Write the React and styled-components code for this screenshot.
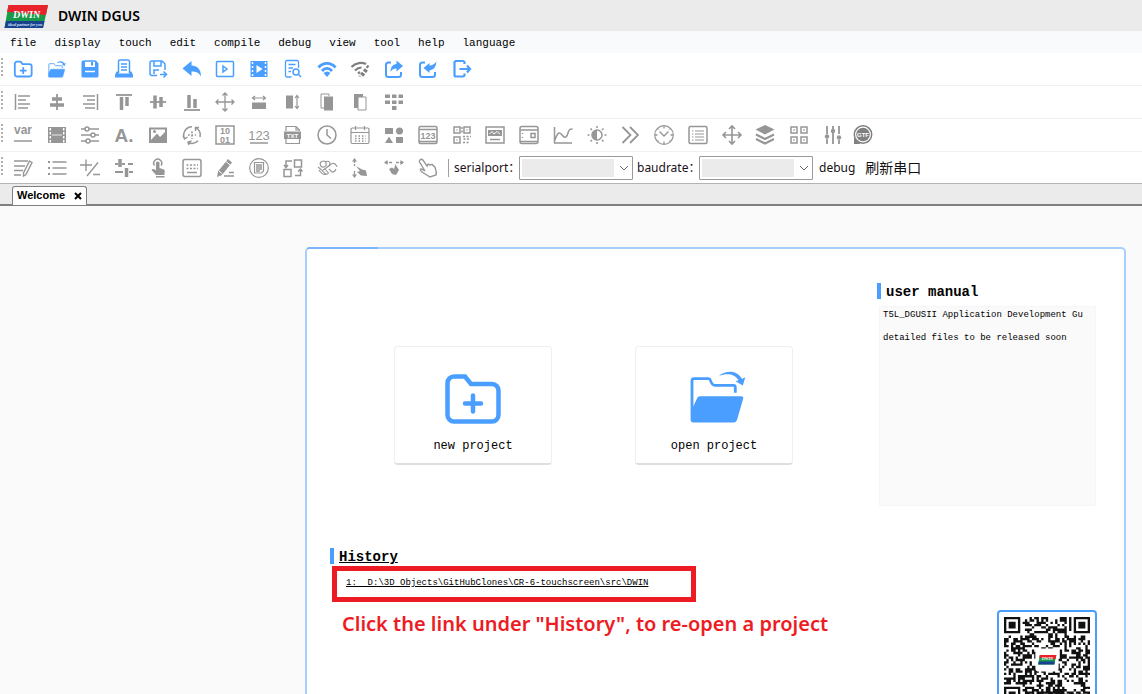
import React from "react";
import styled, { createGlobalStyle } from "styled-components";

const BLUE = "#4a9eff";
const GRAY = "#969696";
const MONO = '"Liberation Mono", "Noto Sans CJK SC", monospace';
const UI = '"Noto Sans", "Noto Sans CJK SC", sans-serif';

const GlobalStyle = createGlobalStyle`
  * { box-sizing: border-box; }
  body { margin: 0; background: #fafafa; color: #000; font-family: ${UI}; }
  button, select { font: inherit; color: inherit; }
`;

const Window = styled.div`
  display: flex;
  flex-direction: column;
  height: 100vh;
  overflow: hidden;
`;

const TitleBar = styled.header`
  display: flex;
  align-items: center;
  gap: 10px;
  flex: none;
  height: 31px;
  padding: 1px 0 0 4px;
  background: #ebebeb;
`;

const AppTitle = styled.h1`
  margin: 0;
  font-size: 14px;
  line-height: 20px;
  font-weight: 600;
`;

const MenuBar = styled.nav`
  display: flex;
  align-items: center;
  gap: 18px;
  flex: none;
  height: 22px;
  padding: 2px 10px 0;
  background: #f9fafc;
`;

const MenuItem = styled.button`
  padding: 0;
  border: 0;
  background: none;
  font-family: ${MONO};
  font-size: 11px;
  line-height: 16px;
`;

const Toolbar = styled.div`
  display: flex;
  align-items: center;
  flex: none;
  height: ${(p) => (p.$last ? 31 : 33)}px;
  padding: ${(p) => (p.$last ? 1 : 0)}px 0 0 1px;
  border-bottom: ${(p) => (p.$last ? "0" : "1px solid #f0f0f0")};
  background: #fff;
  color: ${(p) => (p.$accent ? BLUE : GRAY)};
`;

const Grip = styled.span`
  width: 2px;
  height: 18px;
  margin: 0 3px 4px 0;
  background: repeating-linear-gradient(#b0b0b0 0 2px, transparent 2px 4px);
`;

const ToolGroup = styled.div`
  display: grid;
  grid-auto-flow: column;
  grid-auto-columns: 1fr;
  flex: none;
  width: ${(p) => (p.$count === 4 ? 135 : p.$count * 34)}px;
`;

const ToolButton = styled.button`
  display: flex;
  align-items: center;
  justify-content: center;
  height: 28px;
  padding: 0;
  border: 0;
  background: none;
  color: ${(p) => (p.$muted ? "#808080" : "inherit")};

  svg {
    display: block;
    width: 20px;
    height: 20px;
    overflow: visible;
  }
`;

const SerialPanel = styled.div`
  display: flex;
  align-items: center;
  margin-left: 3px;
  padding-left: 5px;
  border-left: 1px solid #a0a0a0;
  height: 18px;
  color: #1a1020;
  font-size: 12px;
  line-height: 18px;
  white-space: nowrap;
`;

const PortLabel = styled.label`
  width: ${(p) => p.$width}px;
`;

const SelectFrame = styled.span`
  display: grid;
  align-items: center;
  width: 114px;
  height: 24px;
  margin-right: 4px;
  padding: 2px;
  border: 1px solid #9a9a9a;
  border-radius: 1px;
  background: linear-gradient(#ebebeb, #ebebeb) 2px 2px / 92px 18px no-repeat #fff;

  svg {
    grid-area: 1 / 1;
    justify-self: end;
    margin-right: 1px;
    pointer-events: none;
  }
`;

const PortSelect = styled.select`
  grid-area: 1 / 1;
  width: 100%;
  height: 18px;
  border: 0;
  background: transparent;
  appearance: none;
`;

const TextButton = styled.button`
  padding: 0;
  border: 0;
  background: none;
  margin-left: ${(p) => (p.$cjk ? 10 : 2)}px;
  font-size: ${(p) => (p.$cjk ? 14 : 12)}px;
  color: #111;
`;

const TabStrip = styled.div`
  display: flex;
  align-items: flex-end;
  flex: none;
  height: 23px;
  padding-left: 12px;
  border-top: 1px solid #b4b4b4;
  border-bottom: 2px solid #808080;
  background: #ebebeb;
`;

const Tab = styled.div`
  display: flex;
  align-items: center;
  gap: 9px;
  height: 19px;
  margin-bottom: -1px;
  padding: 0 4px 2px;
  border: 1px solid #808080;
  border-bottom: 0;
  border-radius: 3px 3px 0 0;
  background: #fff;
  font: bold 11px/16px "Liberation Sans", sans-serif;
`;

const CloseButton = styled.button`
  display: flex;
  padding: 2px 0 0;
  border: 0;
  background: none;
`;

const Workspace = styled.main`
  display: flex;
  align-items: flex-start;
  flex: 1;
  min-height: 0;
  padding: 41px 16px 0 305px;
  overflow: hidden;
`;

const Card = styled.section`
  flex: 1;
  padding: 0 27px 40px 23px;
  border: 2px solid #a6cfff;
  border-radius: 5px;
  background: #fff;
`;

const Progress = styled.div`
  width: 71px;
  height: 2px;
  margin: -2px 0 34px -23px;
  border-radius: 2px 0 0 0;
  background: #7ab5fb;
`;

const Split = styled.div`
  display: flex;
  justify-content: space-between;
`;

const Projects = styled.div`
  display: flex;
  gap: 83px;
  padding: 63px 0 0 64px;
`;

const ProjectButton = styled.button`
  display: flex;
  flex-direction: column;
  align-items: center;
  gap: 12px;
  width: 158px;
  height: 119px;
  padding: 23px 0 0;
  border: 1px solid #efefef;
  border-bottom: 2px solid #dedede;
  border-radius: 4px;
  background: #fff;
  font-family: ${MONO};
  font-size: 12px;
  line-height: 16px;

  svg {
    width: 56px;
    height: 56px;
    overflow: visible;
    color: ${BLUE};
  }
`;

const Heading = styled.h2`
  display: flex;
  gap: 5px;
  margin: 0;
  font-family: ${MONO};
  font-size: 14px;
  line-height: 18px;
  font-weight: bold;
  text-decoration: ${(p) => (p.$underlined ? "underline" : "none")};

  &::before {
    content: "";
    width: 4px;
    height: 16px;
    background: ${BLUE};
  }
`;

const Manual = styled.aside`
  width: 220px;
`;

const ManualList = styled.ul`
  height: 200px;
  margin: 5px 1px 0 2px;
  padding: 0 3px;
  overflow: hidden;
  border: 1px solid #f5f6f8;
  background: #fafafa;
  font-family: ${MONO};
  font-size: 9px;
  line-height: 16px;
  list-style: none;
  white-space: nowrap;
`;

const ManualItem = styled.li`
  margin-bottom: 7px;
`;

const History = styled.div`
  padding-top: 42px;
`;

const HighlightBox = styled.div`
  width: 364px;
  height: 36px;
  margin-left: 2px;
  padding: 4px 9px;
  border: 5px solid #ed1c24;
`;

const HistoryLink = styled.a`
  display: block;
  color: #000;
  font-family: ${MONO};
  font-size: 9px;
  line-height: 16px;
  white-space: pre;
`;

const Note = styled.p`
  margin: 8px 0 0 12px;
  color: #ed1c24;
  font-size: 20px;
  line-height: 28px;
  font-weight: 600;
  white-space: nowrap;
`;

const QrFrame = styled.div`
  width: 100px;
  height: 100px;
  margin-top: 104px;
  padding: 5px;
  border: 2px solid ${BLUE};
  border-radius: 4px;
`;

function Flag() {
  return (
    <>
      <path d="M4.500 0H44L39 23H.5Z" fill="#189a4a" />
      <path d="M4.500 0H44L42 10L3 7Z" fill="#e8232b" />
      <path d="M2 16H40.500L39 23H.5Z" fill="#17428f" />
      <text x="9" y="13" fill="#fff" fontFamily="Liberation Serif, serif" fontSize="10" fontWeight="bold" fontStyle="italic">DWIN</text>
    </>
  );
}

function Logo() {
  return (
    <svg width="44" height="23" viewBox="0 0 44 23" role="img" aria-label="DWIN">
      <Flag />
      <text x="4" y="21" fill="#dfe8f8" fontFamily="Liberation Serif, serif" fontSize="4" fontWeight="bold" fontStyle="italic">ideal partner for you</text>
    </svg>
  );
}

function FolderPlus({ stroke = 4.5 }) {
  return (
    <g fill="none" stroke="currentColor" strokeWidth={stroke} strokeLinecap="round">
      <path d="M2.500 13a6.500 6.500 0 0 1 6.500-6.500H20L26 14H47a6.500 6.500 0 0 1 6.500 6.500V45a6.500 6.500 0 0 1-6.500 6.500H9A6.500 6.500 0 0 1 2.500 45Z" />
      <path d="M20 33.500H36M28 25.500V41.500" />
    </g>
  );
}

function FolderOpen() {
  return (
    <>
      <path d="M6 42V10.500Q6 8.700 8 8.700H22.500Q24 8.700 24.500 10.500C25.500 14 26.500 15.300 29 15.300H47.500Q49.300 15.300 49.300 17V22.700" fill="none" stroke="currentColor" strokeWidth="2.800" />
      <path d="M11 28.500Q11.800 26.300 14 26.300H55Q58 26.300 57 29.200L51 50Q50.300 52.400 48 52.400H7Q4.600 52.400 4.600 50V42Z" fill="currentColor" />
      <path d="M33 5.700C40 .5 51-.5 56 9L59.300 7.300L56.800 15.500L49.500 11.300L52.500 10.300C48.500 3.500 41 3 33 5.700Z" fill="currentColor" />
    </>
  );
}

const label = (x, y, size, text, weight = "bold") => (
  <text x={x} y={y} fontSize={size} fontWeight={weight} textAnchor="middle" fontFamily="Liberation Sans, sans-serif" fill="currentColor" stroke="none">{text}</text>
);
const F = { fill: "currentColor", stroke: "none" };

const ICONS = {
  New: <g transform="translate(1 .5) scale(.33)"><FolderPlus stroke={5.5} /></g>,
  Open: <g transform="translate(0 2) scale(.31)"><FolderOpen /></g>,
  Save: <><path {...F} d="M1.500 3a1.500 1.500 0 0 1 1.500-1.500H5V8H15V1.500H16L18.500 4.500V17a1.500 1.500 0 0 1-1.500 1.500H3A1.500 1.500 0 0 1 1.500 17Z" /><path d="M5 2H15" /><path {...F} d="M11 3h2v3.500h-2z" /><path stroke="#fff" d="M5 12.500H15" /></>,
  "Save as image": <><path d="M4.500 14V2.500a1.500 1.500 0 0 1 1.500-1.500H14a1.500 1.500 0 0 1 1.500 1.500V14M7 5H13M7 8H13M7 11H13" /><path {...F} d="M2.500 12.500H4.500V14.500H15.500V12.500H17.500L19 16V18.500H1V16Z" /></>,
  "Save as": <><path d="M9 16.500H4a2 2 0 0 1-2-2V4a2 2 0 0 1 2-2H14L17 5V11M6 2V7H13V2M6 15V11H11M12 15.500H18M15.500 12.500L18.500 15.500L15.500 18.500" /></>,
  Undo: <path {...F} d="M.5 9.500L9.500 2V6.500C15 6.500 19 10 19 17.500C17 13.500 14 12.500 9.500 12.500V17Z" />,
  Preview: <><rect x="1.500" y="2.500" width="17" height="15" rx="1" /><path d="M8 7L12 10L8 13Z" /></>,
  Movie: <><path {...F} d="M1.500 2H18.500V18H1.500Z" /><path stroke="#fff" strokeDasharray="2 2" d="M3.500 3V18M16.500 3V18" /><path fill="#fff" stroke="none" d="M7.500 6L13.500 10L7.500 14Z" /></>,
  Inspect: <><path strokeWidth="1.300" d="M8.500 18H4a1.500 1.500 0 0 1-1.500-1.500V3A1.500 1.500 0 0 1 4 1.500H14A1.500 1.500 0 0 1 15.500 3V9M5.500 5.500H12.500M5.500 9H10M5.500 12.500H8" /><circle cx="13" cy="13" r="3" /><path d="M15.500 15.500L18 18" /></>,
  Connect: <><path strokeWidth="2.800" d="M1.500 8.500C6 3 14 3 18.500 8.500M5 12C8 8.500 12 8.500 15 12" /><path {...F} d="M6.500 14Q10 11 13.500 14L10 18Z" /></>,
  Disconnect: <><path strokeWidth="2.200" d="M1.500 8C5.500 3.500 12 3 16 5M5 11.500Q8 8.500 11.500 8.500M8 14.500L10 13" /><path strokeWidth="2.200" strokeDasharray="3 1.500" d="M18.500 6.500L9.500 17.500M17 11L12.500 17" /></>,
  Export: <><path strokeWidth="2" d="M7 3.500H4.500A2.500 2.500 0 0 0 2 6V15.500A2.500 2.500 0 0 0 4.500 18H14.500A2.500 2.500 0 0 0 17 15.500V13" /><path {...F} d="M12.500 1.500L19 7L12.500 12.500V9.500C9.500 9.500 8 10.500 6.500 13C6.500 8.500 8.500 5.500 12.500 5Z" /></>,
  Import: <><path strokeWidth="2" d="M7 3.500H4.500A2.500 2.500 0 0 0 2 6V15.500A2.500 2.500 0 0 0 4.500 18H14.500A2.500 2.500 0 0 0 17 15.500V13" /><path {...F} d="M5.500 9L11.500 4V6.500Q15.500 6.500 18.500 2.500Q18 10.500 11.500 11.500V14Z" /></>,
  Exit: <path strokeWidth="2.200" d="M12.500 5V3.500A1.500 1.500 0 0 0 11 2H4A1.500 1.500 0 0 0 2.500 3.500V16A1.500 1.500 0 0 0 4 17.500H11A1.500 1.500 0 0 0 12.500 16V14.500M7.500 10H18M15 6.500L18 10L15 13.500" />,

  "Align left": <path strokeWidth="1.500" d="M2.500 2V18M5 4H17M5 8H13M5 12H17M5 16H15" />,
  "Align center": <><path strokeWidth="1.800" d="M10 2V18" /><path strokeWidth="3.500" d="M5 7H15M3 13H17" /></>,
  "Align right": <path strokeWidth="1.500" d="M17.500 2V18M3 4H15M7 8H15M3 12H15M5 16H15" />,
  "Align top": <><path strokeWidth="1.800" d="M2 3H18" /><path strokeWidth="3.500" d="M7.500 5V18M13 5V14" /></>,
  "Align middle": <><path strokeWidth="1.800" d="M2 10H18" /><path strokeWidth="3.500" d="M7 3.500V16.500M13 5V15" /></>,
  "Align bottom": <><path strokeWidth="1.800" d="M2 18H18" /><path strokeWidth="3.500" d="M7 3V16M13 7V16" /></>,
  Center: <path strokeWidth="1.300" d="M10 1V19M1 10H19M7.500 3.500L10 1L12.500 3.500M7.500 16.500L10 19L12.500 16.500M3.500 7.500L1 10L3.500 12.500M16.500 7.500L19 10L16.500 12.500" />,
  "Same width": <><path {...F} d="M3 10.500H17V17H3Z" /><path strokeWidth="1.200" d="M4 6H16M6 4L3.500 6L6 8M14 4L16.500 6L14 8" /></>,
  "Same height": <><path {...F} d="M3 3.500H10V16.500H3Z" /><path strokeWidth="1.200" d="M14 4V16M12 6L14 3.500L16 6M12 14L14 16.500L16 14" /></>,
  "Bring forward": <><path strokeWidth="1" d="M8 16H4V2H12V4" /><path {...F} d="M7 4.500H16V18.500H7Z" /></>,
  "Send back": <><path {...F} d="M4 2H13V5H8V16H4Z" /><path strokeWidth="1" d="M8 5H16V18H8Z" /></>,
  "Grid layout": <path {...F} d="M1 2.500H6V6H1ZM8 2.500H12.500V6H8ZM14.500 2.500H19V6H14.500ZM1 8.500H6V12H1ZM8 8.500H12.500V12H8ZM14.500 8.500H19V12H14.500ZM8 14H12.500V18H8Z" />,

  Variable: <>{label(10, 9, 12, "var")}<path d="M1 16H19" /></>,
  Animation: <><path {...F} d="M1 2H19V18H1Z" /><path stroke="#fff" strokeDasharray="2.500 1.500" d="M3.300 3V18M16.700 3V18" /><path stroke="#fff" strokeWidth=".8" d="M5 10H15" /></>,
  Slider: <><path d="M1 4H5M9 4H19M1 10H11M15 10H19M1 16H6M10 16H19" /><circle cx="7" cy="4" r="2" /><circle cx="13" cy="10" r="2" /><circle cx="8" cy="16" r="2" /></>,
  Artword: label(10, 16.5, 19, "A."),
  Picture: <><path {...F} d="M1 2.500H19V18H1Z" /><path fill="#fff" stroke="none" d="M3 15L9 8.500L12 12L17 7V4.500H3Z" /><circle cx="6.500" cy="6.500" r="1.500" {...F} /></>,
  Rotation: <><path d="M2.500 13.500A8.300 8.300 0 0 1 10 1.700M14 2.800A8.300 8.300 0 0 1 18 12M16 15.800A8.300 8.300 0 0 1 6 17.300M13.500 6L13.500 2.500L17 2.500M9.500 16L6 17.300L7 20M1 10.500L2.500 14L5.500 12" /><path strokeWidth="1.700" strokeDasharray="1.700 1.700" d="M10 6.500V14M6 10H14" /></>,
  "Bit variable": <><rect x="1" y="1" width="18" height="18" />{label(10, 9, 9, "10")}{label(10, 17.5, 9, "01")}</>,
  "Data variable": <>{label(10, 15, 13, "123", "normal")}<path d="M1 18H19" /></>,
  Text: <><path strokeWidth="1.200" d="M3 6V1.500H13L16.500 5V6M3 14V18.500H16.500V14M13 2V5H16" /><path {...F} d="M1 6.500H18V14H1Z" /><g color="#fff">{label(9.500, 12.500, 6, "TXT")}</g></>,
  Clock: <><circle cx="10" cy="10" r="9" /><path d="M10 4V10L14 13.500" /></>,
  Calendar: <><rect x="1" y="3" width="18" height="15.500" rx="1.500" strokeWidth="1.200" /><path strokeWidth="1.200" d="M1 7.500H19M5.500 1V5M14.500 1V5" /><path strokeDasharray="1.500 2" d="M5 11H16M5 13.500H16M5 16H16" /></>,
  Shapes: <><path {...F} d="M1 3H9V9H1ZM5 11.500L9 18H1ZM12 12H19V18H12Z" /><circle {...F} cx="15.500" cy="6" r="3.500" /></>,
  Counter: <><rect x="1" y="1.500" width="18" height="17" rx="1.500" /><path d="M1 4.500H19M1 16.500H19" />{label(10, 13.500, 9, "123")}</>,
  "QR code": <><path d="M2 2H8V8H2ZM12 2H18V8H12ZM2 12H8V18H2ZM4.500 5H5.500M14.500 5H15.500M4.500 15H5.500" /><path strokeDasharray="2 1.500" d="M11 11.500H19M11.500 14H18M11 17.500H18M10 2V9" /></>,
  Banner: <><rect x="1" y="2" width="18" height="16" /><path {...F} d="M3 5H17V11H3Z" /><path stroke="#fff" strokeWidth="1" d="M4.500 9L7 6.500L9 9L12 6.500L15 9" /><path d="M5 14.500H15" /></>,
  Popup: <><rect x="1" y="1.500" width="18" height="17" rx="2" /><path d="M1 5H19M1 16.500H19" /><rect x="12" y="8.500" width="4" height="4" /><path d="M3.500 8V9M3.500 12V13" /></>,
  Curve: <path d="M1.500 2V18H19M2 15C5 6 7 7 9.500 10.500S14 12 15 8S17 4 19.500 4" />,
  Brightness: <><circle cx="10" cy="10" r="5" /><path {...F} d="M10 5A5 5 0 0 0 10 15Z" /><path d="M10 1V3M10 17V19M.5 10H2.500M17.500 10H19.500M3.500 3.500L5 5M15 15L16.500 16.500M16.500 3.500L15 5M5 15L3.500 16.500" /></>,
  Scroll: <path strokeWidth="1.800" d="M2.500 2L10.500 10L2.500 18M10 2L18 10L10 18" />,
  "Analog clock": <><circle cx="10" cy="10" r="9.300" strokeWidth="1.200" /><path strokeWidth="1.300" d="M5.500 6.500L10 11L14.500 6.500M10 1V3.500M10 16.500V19M1 10H3.500M16.500 10H19M3.500 3.500L4.500 4.500M15.500 15.500L16.500 16.500M16.500 3.500L15.500 4.500M4.500 15.500L3.500 16.500" /></>,
  List: <><rect x="1" y="1.500" width="18" height="17" rx="1.500" /><path strokeWidth="1.200" d="M4 6H5.500M7 6H16M4 9H5.500M7 9H16M4 12H5.500M7 12H16M4 15H5.500M7 15H16" /></>,
  Move: <path strokeWidth="1.600" d="M10 1V19M1 10H19M7 4L10 1L13 4M7 16L10 19L13 16M4 7L1 10L4 13M16 7L19 10L16 13" />,
  Layers: <><path {...F} d="M10 0L19.500 4.500L10 9.500L.5 4.500Z" /><path strokeWidth="2.200" d="M1 9.500L10 14L19 9.500M1 14L10 18.500L19 14" /></>,
  Tiles: <path d="M2 2H8V8H2ZM12 2H18V8H12ZM2 12H8V18H2ZM12 12H18V18H12ZM4.300 5H5.700M14.300 5H15.700M4.300 15H5.700M14.300 15H15.700" />,
  Mixer: <><path strokeWidth="1.800" d="M4 1V9M4 14V19M10 1V4M10 8V19M16 1V9M16 15V19" /><circle {...F} cx="4" cy="11.500" r="2.200" /><circle {...F} cx="10" cy="6" r="2.200" /><circle {...F} cx="16" cy="12.500" r="2.200" /></>,
  "GTF font": <g transform="translate(-4 0)"><circle cx="10" cy="9.500" r="8.700" strokeWidth="1.500" /><circle {...F} cx="10" cy="9.500" r="6.800" /><path {...F} d="M1 12V19H8L4 16.500Z" /><g color="#fff">{label(10, 11.500, 6, "GTF")}</g></g>,

  "Text input": <path strokeWidth="1.400" d="M1 3H15M1 8H12M1 12.500H10M1 17H8M16.500 3L19 4.500L13 16.500L10.500 18V15Z" />,
  "Menu list": <><path d="M5.500 4H19.500M5.500 10H19.500M5.500 16H19.500" /><path strokeWidth="2.200" d="M1 4H3M1 10H3M1 16H3" /></>,
  Increment: <path strokeWidth="1.400" d="M0 7H12M6 1.500V13M18 4.500L7 18M13 16.500H20" />,
  Drag: <><path strokeWidth="2" d="M1 6H4M8 6H11M14 6H19M1 14H9M15 14H19" /><path strokeWidth="3.500" d="M6 1V9M12.500 10V19" /></>,
  Touch: <><path {...F} d="M8 4.500Q10 2.500 11.500 4.500V10L16 11.500Q17.500 12.500 16.500 15V17H8L3.500 12Q5 10 8 12.500ZM8 18H16.500V19.500H8Z" /><path d="M6.500 7.500A4 4 0 1 1 13 7.500" /></>,
  Keyboard: <><rect x="1" y="1.500" width="18" height="17" rx="2" /><path strokeDasharray="2 1.500" d="M4.500 7H16M4.500 10.500H16" /><path d="M5 14.500H15" /></>,
  Edit: <><path {...F} d="M13 1L17 4.500L7 17L2 19L3 13.500Z" /><path stroke="#fff" strokeWidth="1" d="M4 13L7.500 16M11 3.500L15 7" /><path d="M9 18H19M14 14.500H19" /></>,
  Record: <><circle cx="10" cy="10" r="9.300" strokeWidth="1.200" /><path strokeWidth="1.200" d="M5.500 4.500H14.500V13L12.500 15H5.500Z" /><path strokeWidth="1.300" d="M7 7H13M7 9H13M7 11H13M7 13H11" /></>,
  Swap: <path d="M11.500 2H18.500V9H11.500ZM1 11.500H8V18.500H1ZM9 3H3V9M1 7L3 9.500L5 7M12 17.500H17.500V11.500M15 13.500L17.500 11L19.500 13.500" />,
  Pinch: <path strokeWidth="1.100" d="M1 9Q5 12 8 15.500Q10 17 11.500 15L8 11M6 12L12 8Q16 4 18 6Q20 8 20 9M9 5A3 3 0 1 0 7 9Q10 8 9 5M8 4Q12 2 13 5Q13 8 10 9M12 11L15 14Q18 14 19 11M2 12Q5 17 9 16.500" />,
  "Swipe vertical": <><path strokeWidth="1.300" strokeDasharray="4 1" d="M4.500 1V8M4.500 13V19" /><path {...F} d="M4.500 0L7 3.500H2ZM4.500 20L7 16.500H2ZM6 8L12 11.500L16 12.500L17 18L11 17.500L7 14L10 13Z" /></>,
  "Swipe horizontal": <><path strokeWidth="1.300" strokeDasharray="3 1" d="M1 4.500H8M12 4.500H19" /><path {...F} d="M0 4.500L3.500 2V7ZM20 4.500L16.500 2V7ZM11.500 6L13 9L15 12L12 17L8 16L5 11L8 9.500L10 11Z" /></>,
  Gesture: <path strokeWidth="1.400" d="M2 2Q4 0 5.500 3L9 8Q10 5 12 7Q14 5.500 15.500 8Q17 8 17.500 11Q19 15 18 17L12 19L4 14Q1 11 3.500 11L7 13L1.500 4Q1 3 2 2Z" />,
};

const ROWS = [
  ["New", "Open", "Save", "Save as image", "Save as", "Undo", "Preview", "Movie", "Inspect", "Connect", "Disconnect", "Export", "Import", "Exit"],
  ["Align left", "Align center", "Align right", "Align top", "Align middle", "Align bottom", "Center", "Same width", "Same height", "Bring forward", "Send back", "Grid layout"],
  ["Variable", "Animation", "Slider", "Artword", "Picture", "Rotation", "Bit variable", "Data variable", "Text", "Clock", "Calendar", "Shapes", "Counter", "QR code", "Banner", "Popup", "Curve", "Brightness", "Scroll", "Analog clock", "List", "Move", "Layers", "Tiles", "Mixer", "GTF font"],
  ["Text input", "Menu list", "Increment", "Drag", "Touch", "Keyboard", "Edit", "Record", "Swap", "Pinch", "Swipe vertical", "Swipe horizontal", "Gesture"],
];

const MENUS = ["file", "display", "touch", "edit", "compile", "debug", "view", "tool", "help", "language"];

function Tools({ names }) {
  const groups = [];
  for (let i = 0; i < names.length; i += 4) groups.push(names.slice(i, i + 4));
  return groups.map((group) => (
    <ToolGroup key={group[0]} $count={group.length}>
      {group.map((name) => (
        <ToolButton key={name} type="button" aria-label={name} $muted={name === "Disconnect" || name === "GTF font"}>
          <svg viewBox="0 0 20 20" fill="none" stroke="currentColor" strokeWidth="1.500">{ICONS[name]}</svg>
        </ToolButton>
      ))}
    </ToolGroup>
  ));
}

function PortField({ id, text, width }) {
  return (
    <>
      <PortLabel htmlFor={id} $width={width}>{text}</PortLabel>
      <SelectFrame>
        <PortSelect id={id} />
        <svg width="10" height="6" viewBox="0 0 10 6" fill="none" stroke="#666"><path d="M1 1L5 5L9 1" /></svg>
      </SelectFrame>
    </>
  );
}

const QR_SIZE = 37;

function finderModule(x, y) {
  for (const [fx, fy] of [[0, 0], [QR_SIZE - 7, 0], [0, QR_SIZE - 7]]) {
    const dx = x - fx;
    const dy = y - fy;
    if (dx >= -1 && dx <= 7 && dy >= -1 && dy <= 7) {
      const ring = Math.max(Math.abs(dx - 3), Math.abs(dy - 3));
      return ring === 3 || ring <= 1;
    }
  }
  return null;
}

function qrPath() {
  let seed = 20231;
  let d = "";
  for (let y = 0; y < QR_SIZE; y++) {
    for (let x = 0; x < QR_SIZE; x++) {
      seed = (seed * 1103515245 + 12345) % 2147483648;
      const finder = finderModule(x, y);
      if (finder === null ? seed / 2147483648 > 0.48 : finder) d += `M${x} ${y}h1v1h-1z`;
    }
  }
  return d;
}

const QR_PATH = qrPath();

function QrCode() {
  return (
    <svg width="86" height="86" viewBox={`0 0 ${QR_SIZE} ${QR_SIZE}`} role="img" aria-label="QR code">
      <path d={QR_PATH} fill="#111" />
      <rect x="13.500" y="13.500" width="10" height="10" rx="1.500" fill="#fff" />
      <g transform="translate(14.600 16.300) scale(.18)"><Flag /></g>
    </svg>
  );
}

export default function App() {
  return (
    <Window>
      <GlobalStyle />
      <TitleBar>
        <Logo />
        <AppTitle>DWIN DGUS</AppTitle>
      </TitleBar>
      <MenuBar>
        {MENUS.map((name) => <MenuItem key={name} type="button">{name}</MenuItem>)}
      </MenuBar>
      {ROWS.map((names, i) => (
        <Toolbar key={names[0]} $accent={i === 0} $last={i === 3}>
          <Grip />
          <Tools names={names} />
          {i === 3 && (
            <SerialPanel>
              <PortField id="serialport" text="serialport：" width={65} />
              <PortField id="baudrate" text="baudrate：" width={62} />
              <TextButton type="button">debug</TextButton>
              <TextButton type="button" $cjk>刷新串口</TextButton>
            </SerialPanel>
          )}
        </Toolbar>
      ))}
      <TabStrip>
        <Tab>
          Welcome
          <CloseButton type="button" aria-label="Close Welcome">
            <svg width="8" height="8" viewBox="0 0 8 8" stroke="#000" strokeWidth="2"><path d="M1 1L7 7M7 1L1 7" /></svg>
          </CloseButton>
        </Tab>
      </TabStrip>
      <Workspace>
        <Card>
          <Progress />
          <Split>
            <Projects>
              <ProjectButton type="button">
                <svg viewBox="0 0 56 56"><FolderPlus /></svg>
                new project
              </ProjectButton>
              <ProjectButton type="button">
                <svg viewBox="0 0 56 56"><FolderOpen /></svg>
                open project
              </ProjectButton>
            </Projects>
            <Manual>
              <Heading>user manual</Heading>
              <ManualList>
                <ManualItem>T5L_DGUSII Application Development Gu</ManualItem>
                <ManualItem>detailed files to be released soon</ManualItem>
              </ManualList>
            </Manual>
          </Split>
          <Split>
            <History>
              <Heading $underlined>History</Heading>
              <HighlightBox>
                <HistoryLink href="#project">{"1:  D:\\3D Objects\\GitHubClones\\CR-6-touchscreen\\src\\DWIN"}</HistoryLink>
              </HighlightBox>
              <Note>Click the link under "History", to re-open a project</Note>
            </History>
            <QrFrame><QrCode /></QrFrame>
          </Split>
        </Card>
      </Workspace>
    </Window>
  );
}
